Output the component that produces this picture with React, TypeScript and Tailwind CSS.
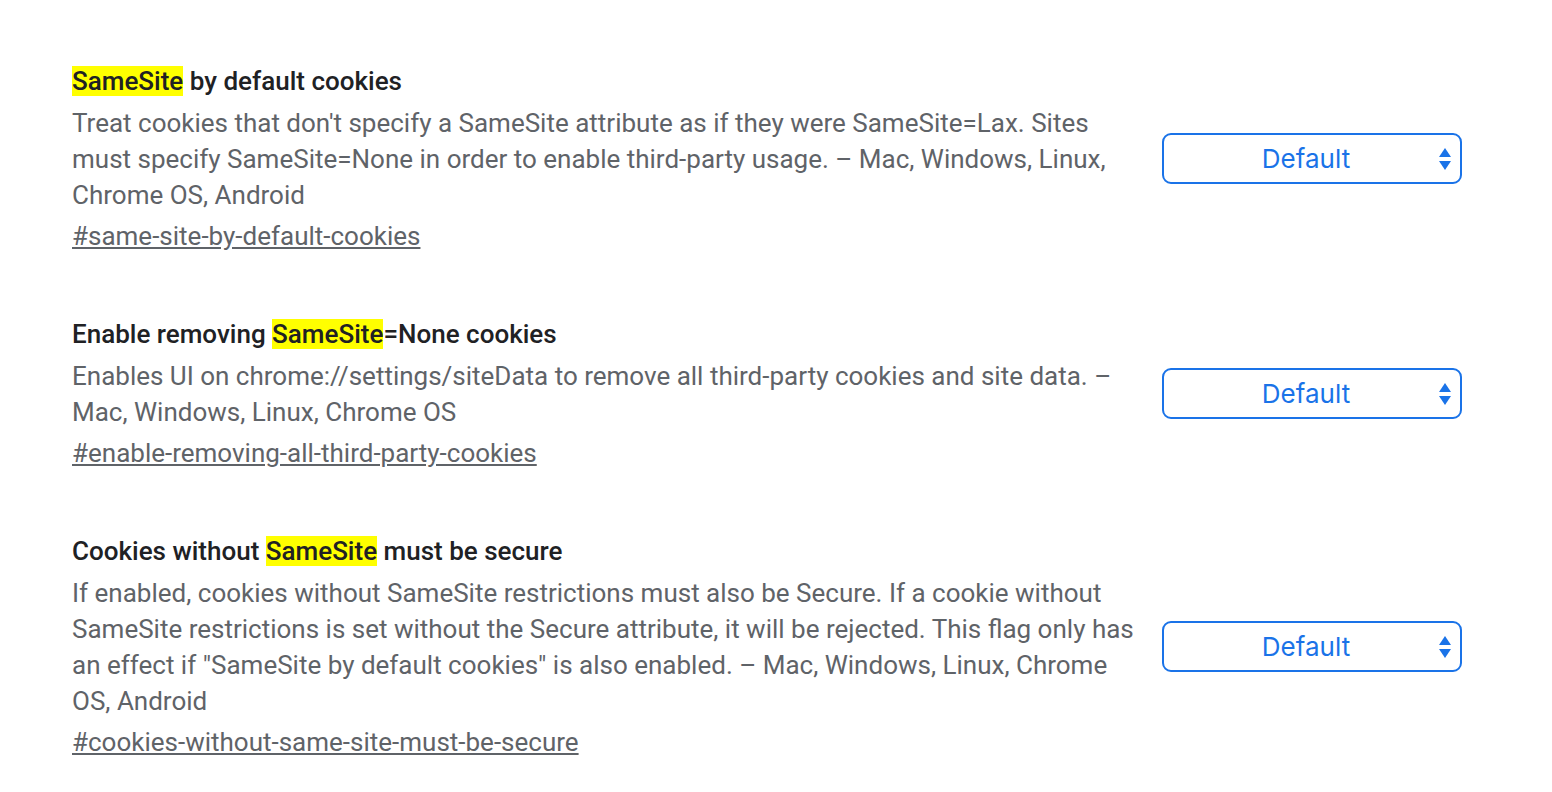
import React from 'react';

interface Flag {
  title: React.ReactNode;
  lines: string;
  hash: string;
}

const Mark = ({ children }: { children: React.ReactNode }) => (
  <span className="bg-[#ffff00]">{children}</span>
);

const FLAGS: Flag[] = [
  {
    title: (
      <>
        <Mark>SameSite</Mark> by default cookies
      </>
    ),
    lines:
      "Treat cookies that don't specify a SameSite attribute as if they were SameSite=Lax. Sites must specify SameSite=None in order to enable third-party usage. – Mac, Windows, Linux, Chrome OS, Android",
    hash: '#same-site-by-default-cookies',
  },
  {
    title: (
      <>
        Enable removing <Mark>SameSite</Mark>=None cookies
      </>
    ),
    lines:
      'Enables UI on chrome://settings/siteData to remove all third-party cookies and site data. – Mac, Windows, Linux, Chrome OS',
    hash: '#enable-removing-all-third-party-cookies',
  },
  {
    title: (
      <>
        Cookies without <Mark>SameSite</Mark> must be secure
      </>
    ),
    lines:
      'If enabled, cookies without SameSite restrictions must also be Secure. If a cookie without SameSite restrictions is set without the Secure attribute, it will be rejected. This flag only has an effect if "SameSite by default cookies" is also enabled. – Mac, Windows, Linux, Chrome OS, Android',
    hash: '#cookies-without-same-site-must-be-secure',
  },
];

function SelectBox() {
  return (
    <div className="w-[300px] h-[51px] shrink-0 rounded-[9px] border-2 border-[#1a73e8] flex items-center relative">
      <span className="flex-1 text-center text-[26px] text-[#1a73e8] font-['Inter',sans-serif] pr-[12px]">
        Default
      </span>
      <svg className="absolute right-[8px] top-1/2 -translate-y-1/2" width="14" height="24" viewBox="0 0 14 24">
        <path d="M7 1 L13 10 L1 10 Z" fill="#1a73e8" />
        <path d="M1 14 L13 14 L7 23 Z" fill="#1a73e8" />
      </svg>
    </div>
  );
}

export default function App() {
  return (
    <div className="min-h-screen bg-white font-['Roboto',sans-serif] pl-[72px] pr-[90px] pt-[63px]">
      {FLAGS.map((f, i) => (
        <div key={i} className="flex items-center gap-[20px] mb-[62px]">
          <div className="w-[1070px] shrink-0">
            <h2 className="text-[26px] leading-[36px] font-medium text-[#202124]">{f.title}</h2>
            <p className="mt-[6px] text-[26px] leading-[36px] text-[#5f6368]">{f.lines}</p>
            <a className="block mt-[5px] text-[26px] leading-[36px] text-[#5f6368] underline">
              {f.hash}
            </a>
          </div>
          <SelectBox />
        </div>
      ))}
    </div>
  );
}
